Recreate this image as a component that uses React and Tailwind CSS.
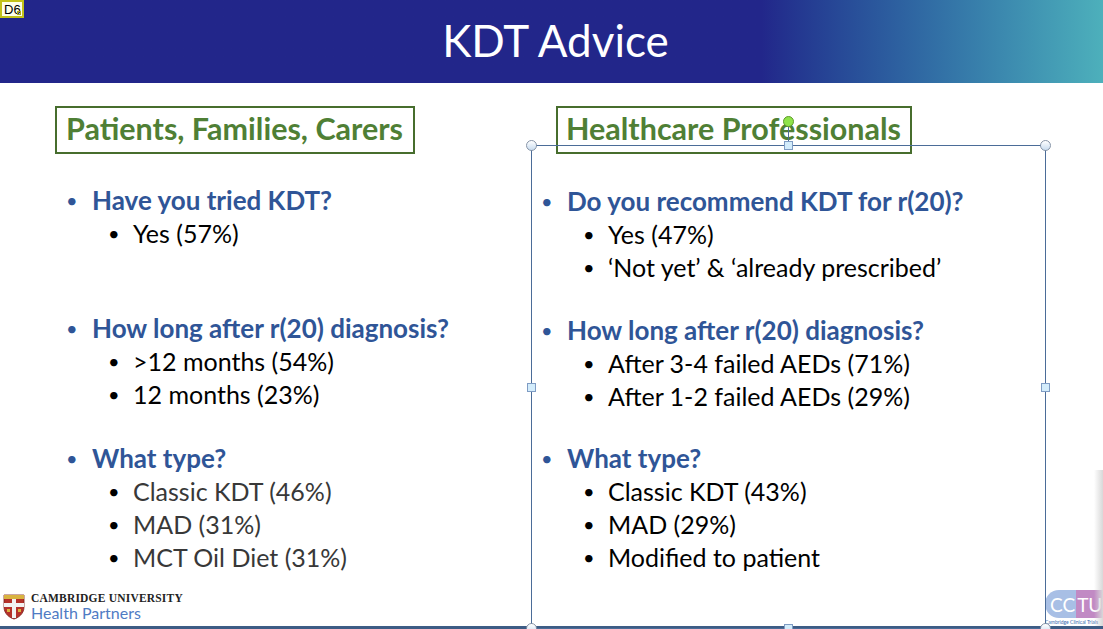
import React from 'react';

const font = { fontFamily: 'Lato, "Open Sans", sans-serif' };

function Section({ title, items, gray, gap }) {
  return (
    <div className={gap}>
      <div className="flex items-center leading-[34px]">
        <span className="w-[26px] text-[20px] text-[#2f5597]">•</span>
        <span className="text-[26px] font-bold text-[#2f5597]">{title}</span>
      </div>
      {items.map((t) => (
        <div key={t} className="flex items-center pl-[42px] leading-[33px]">
          <span className="w-[25px] text-[20px] text-black">•</span>
          <span className={'text-[25px] ' + (gray ? 'text-[#383838]' : 'text-black')}>{t}</span>
        </div>
      ))}
    </div>
  );
}

function Handle({ className, square }) {
  return (
    <div
      className={
        'absolute ' +
        (square
          ? 'w-[9px] h-[9px] border border-[#7f9cc4] bg-[#d3ecfb] '
          : 'w-[11px] h-[11px] rounded-full border border-[#8795a8] bg-linear-to-b from-[#ffffff] to-[#c9dcef] ') +
        className
      }
    />
  );
}

function CambridgeLogo() {
  return (
    <div className="flex items-center gap-[6px]">
      <svg width="22" height="26" viewBox="0 0 22 26">
        <path d="M1 1 H21 V13 C21 20 15 24 11 25 C7 24 1 20 1 13 Z" fill="#b5312a" stroke="#7a1f1a" strokeWidth="0.8" />
        <rect x="9" y="1" width="4" height="23" fill="#f2f2f2" />
        <rect x="1" y="9" width="20" height="4" fill="#f2f2f2" />
        <rect x="1" y="1" width="20" height="4" fill="#d9b340" />
        <rect x="4" y="15" width="3" height="3" fill="#d9b340" />
        <rect x="15" y="15" width="3" height="3" fill="#d9b340" />
      </svg>
      <div className="flex flex-col leading-none">
        <span className="text-[11.5px] font-bold tracking-[0.2px] text-[#222]" style={{ fontFamily: '"Liberation Serif", serif' }}>
          CAMBRIDGE UNIVERSITY
        </span>
        <span className="text-[16px] text-[#4f7bc4] mt-[1px]" style={font}>Health Partners</span>
      </div>
    </div>
  );
}

function CctuLogo() {
  return (
    <div className="flex flex-col items-start w-[58px]">
      <div className="flex h-[28px] overflow-hidden rounded-l-full">
        <div className="flex items-center bg-[#a8bfe5] pl-[5px] pr-[1px] text-[19px] text-white leading-none" style={font}>CC</div>
        <div className="flex items-center bg-[#c18ac4] pl-[1px] pr-[2px] text-[19px] text-white leading-none" style={font}>TU</div>
      </div>
      <span className="text-[5px] whitespace-nowrap text-[#3a6ab0] leading-[8px]" style={font}>Cambridge Clinical Trials</span>
    </div>
  );
}

export default function App() {
  return (
    <div className="relative w-[1103px] h-[629px] overflow-hidden bg-white flex flex-col" style={font}>
      {/* Title bar */}
      <div className="relative h-[83px] shrink-0 flex items-center justify-center bg-linear-to-r from-[#22268a] from-[69%] to-[#4db0bb]">
        <h1 className="text-[44px] text-white leading-none pb-[4px] pl-[8px]">KDT Advice</h1>
        <div className="absolute left-0 top-0 w-[24px] h-[18px] border-2 border-[#c2c21a] bg-[#ffffea] flex items-center pl-[2px] text-[13px] leading-none text-black" style={{ fontFamily: '"Liberation Sans", sans-serif' }}>
          D6
          <span className="absolute right-[1px] bottom-[1px] w-[4px] h-[4px] border border-[#a8a820]" />
        </div>
      </div>

      {/* Columns */}
      <div className="flex-1 min-h-0 flex pt-[23px]">
        <div className="w-[531px] shrink-0 pl-[55px]">
          <div className="inline-flex h-[48px] items-center border-2 border-[#476d2d] pl-[9px] pr-[10px]">
            <span className="text-[30.5px] font-bold text-[#4f7f35] leading-none pb-[3px]">Patients, Families, Carers</span>
          </div>
          <div className="mt-[29px] pl-[11px]">
            <Section title="Have you tried KDT?" items={['Yes (57%)']} gap="mb-[61px]" />
            <Section title="How long after r(20) diagnosis?" items={['>12 months (54%)', '12 months (23%)']} gap="mb-[30px]" />
            <Section title="What type?" items={['Classic KDT (46%)', 'MAD (31%)', 'MCT Oil Diet (31%)']} gray />
          </div>
        </div>
        <div className="w-[514px] shrink-0 pl-[25px]">
          <div className="inline-flex h-[48px] items-center border-2 border-[#476d2d] pl-[8px] pr-[9px]">
            <span className="text-[30.5px] font-bold text-[#4f7f35] leading-none pb-[3px]">Healthcare Professionals</span>
          </div>
          <div className="mt-[30px] -ml-[15px]">
            <Section title="Do you recommend KDT for r(20)?" items={['Yes (47%)', '‘Not yet’ & ‘already prescribed’']} gap="mb-[29px]" />
            <Section title="How long after r(20) diagnosis?" items={['After 3-4 failed AEDs (71%)', 'After 1-2 failed AEDs (29%)']} gap="mb-[28px]" />
            <Section title="What type?" items={['Classic KDT (43%)', 'MAD (29%)', 'Modified to patient']} />
          </div>
        </div>
      </div>

      {/* Footer logos */}
      <div className="h-[44px] shrink-0 flex items-end justify-between pl-[3px]">
        <div className="pb-[5px]">
          <CambridgeLogo />
        </div>
        <div>
          <CctuLogo />
        </div>
      </div>
      <div className="h-[3px] shrink-0 bg-[#3d5c85]" />

      {/* Right edge shadow */}
      <div className="absolute right-0 top-[470px] bottom-[3px] w-[9px] bg-linear-to-l from-[#d8d8d8] to-transparent" />

      {/* Selection frame over the right text box */}
      <div className="absolute left-[531px] top-[145px] w-[515px] h-[484px] border border-[#4b6c98]">
        <div className="absolute left-[256px] -top-[25px] w-px h-[25px] bg-[#4b6c98]" />
        <div className="absolute left-[251px] -top-[30px] w-[11px] h-[11px] rounded-full border border-[#5e9a2a] bg-[#8fe34a]" />
        <Handle className="-left-[6px] -top-[6px]" />
        <Handle className="-right-[6px] -top-[6px]" />
        <Handle className="-left-[6px] -bottom-[6px]" />
        <Handle className="-right-[6px] -bottom-[6px]" />
        <Handle square className="left-[252px] -top-[5px]" />
        <Handle square className="left-[252px] -bottom-[5px]" />
        <Handle square className="-left-[5px] top-[237px]" />
        <Handle square className="-right-[5px] top-[237px]" />
      </div>
    </div>
  );
}
